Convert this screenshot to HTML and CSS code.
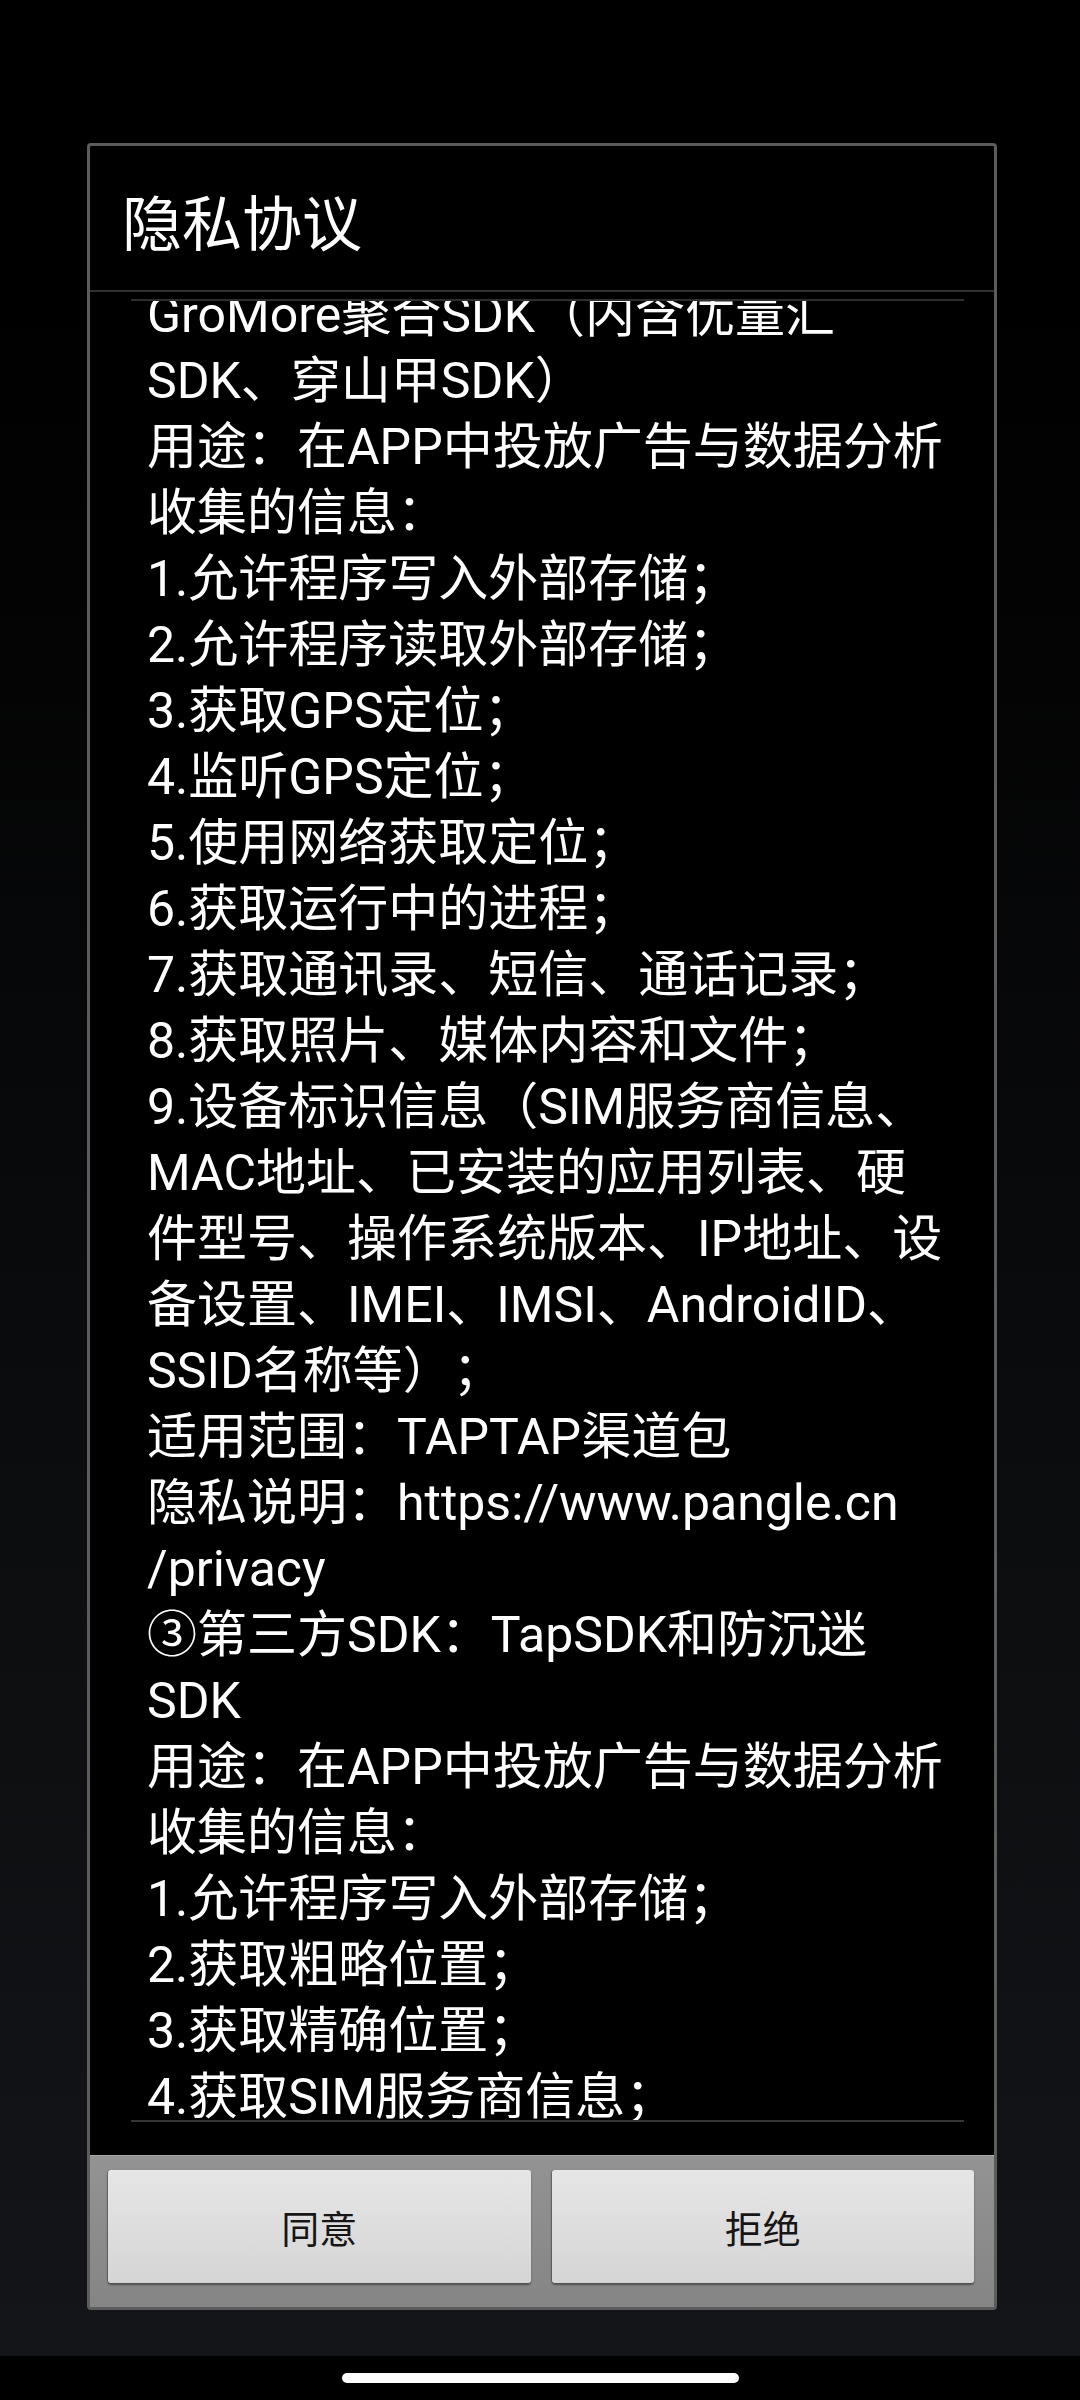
FILE: index.html
```html
<!DOCTYPE html>
<html lang="zh-CN">
<head>
    <meta charset="UTF-8">
    <meta name="viewport" content="width=device-width, initial-scale=1.0">
    <title>隐私协议</title>
    <link rel="stylesheet" href="styles.css">
</head>
<body>
    <div class="screen">
        <div class="dialog">
            <div class="dialog-title">隐私协议</div>
            <div class="title-divider"></div>
            <div class="dialog-body">
                <div class="scroll">
                    <div class="content">
                        GroMore聚合SDK（内含优量汇<br>
                        SDK、穿山甲SDK）<br>
                        用途：在APP中投放广告与数据分析<br>
                        收集的信息：<br>
                        1.允许程序写入外部存储；<br>
                        2.允许程序读取外部存储；<br>
                        3.获取GPS定位；<br>
                        4.监听GPS定位；<br>
                        5.使用网络获取定位；<br>
                        6.获取运行中的进程；<br>
                        7.获取通讯录、短信、通话记录；<br>
                        8.获取照片、媒体内容和文件；<br>
                        9.设备标识信息（SIM服务商信息、<br>
                        MAC地址、已安装的应用列表、硬<br>
                        件型号、操作系统版本、IP地址、设<br>
                        备设置、IMEI、IMSI、AndroidID、<br>
                        SSID名称等）；<br>
                        适用范围：TAPTAP渠道包<br>
                        隐私说明：https://www.pangle.cn<br>
                        /privacy<br>
                        ③第三方SDK：TapSDK和防沉迷<br>
                        SDK<br>
                        用途：在APP中投放广告与数据分析<br>
                        收集的信息：<br>
                        1.允许程序写入外部存储；<br>
                        2.获取粗略位置；<br>
                        3.获取精确位置；<br>
                        4.获取SIM服务商信息；
                    </div>
                </div>
            </div>
            <div class="button-panel">
                <button type="button" class="dialog-btn">同意</button>
                <button type="button" class="dialog-btn">拒绝</button>
            </div>
        </div>
    </div>
    <div class="nav-bar">
        <div class="home-pill"></div>
    </div>
</body>
</html>
```
FILE: styles.css
```css
body {
    margin: 0;
    padding: 0;
    background-color: #000;
    font-family: Roboto, "Noto Sans CJK SC", sans-serif;
    text-spacing-trim: space-all;
}

.screen {
    height: 2356px;
    padding-top: 143px;
    box-sizing: border-box;
    background: linear-gradient(to bottom, #000 0%, #000 12%, #0b0c0e 60%, #131518 100%);
}

.dialog {
    width: 910px;
    margin-left: 87px;
    box-sizing: border-box;
    border: 3px solid #5c5c5c;
    border-radius: 4px;
    background-color: #000;
}

.dialog-title {
    height: 144px;
    box-sizing: border-box;
    padding: 44px 0 0 32px;
    font-family: "Noto Sans CJK SC", sans-serif;
    font-size: 60px;
    line-height: 60px;
    color: #fff;
}

.title-divider {
    height: 2px;
    background-color: #323232;
}

.dialog-body {
    padding: 7px 30px 33px 41px;
}

.scroll {
    height: 1823px;
    box-sizing: border-box;
    border-top: 2px solid #2e2e2e;
    border-bottom: 2px solid #363636;
    overflow: hidden;
}

.content {
    margin-top: -19px;
    padding-left: 16px;
    font-size: 50px;
    line-height: 66px;
    color: #fff;
    white-space: nowrap;
}

.button-panel {
    display: flex;
    gap: 21px;
    height: 152px;
    box-sizing: border-box;
    padding: 14px 20px 25px 18px;
    border-top: 1px solid #a6a6a6;
    background: linear-gradient(to bottom, #939393, #858585);
}

.dialog-btn {
    flex: 1;
    height: 113px;
    border: none;
    border-radius: 3px;
    background: linear-gradient(to bottom, #e6e6e6, #d5d5d5);
    box-shadow: 0 2px 2px rgba(0, 0, 0, 0.4), -1px 0 1px rgba(0, 0, 0, 0.25);
    font-family: "Noto Sans CJK SC", sans-serif;
    font-size: 38px;
    color: #161616;
    padding: 0;
}

.nav-bar {
    height: 44px;
    background-color: #000;
    display: flex;
    justify-content: center;
    padding-top: 17px;
    box-sizing: border-box;
}

.home-pill {
    width: 397px;
    height: 10px;
    border-radius: 5px;
    background-color: #fff;
}
```
